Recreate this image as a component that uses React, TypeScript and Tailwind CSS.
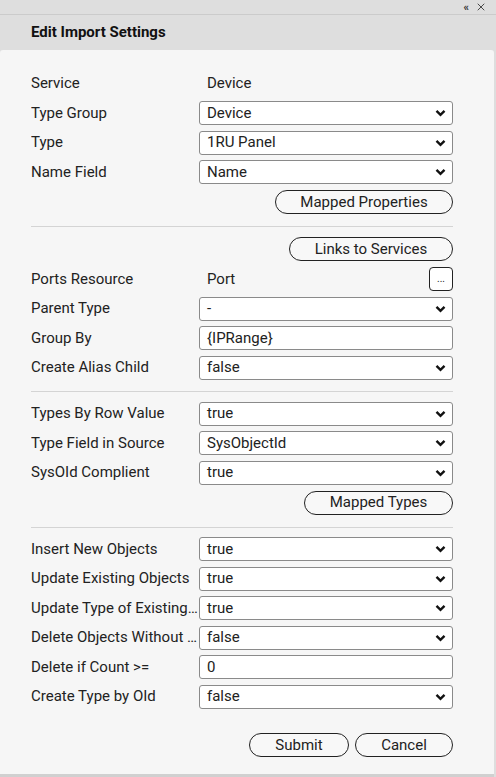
import { X } from "lucide-react";

type Field =
  | { kind: "text"; label: string; value: string; extra?: boolean }
  | { kind: "select"; label: string; value: string }
  | { kind: "input"; label: string; value: string };

const sectionOne: Field[] = [
  { kind: "text", label: "Service", value: "Device" },
  { kind: "select", label: "Type Group", value: "Device" },
  { kind: "select", label: "Type", value: "1RU Panel" },
  { kind: "select", label: "Name Field", value: "Name" },
];

const sectionTwo: Field[] = [
  { kind: "text", label: "Ports Resource", value: "Port", extra: true },
  { kind: "select", label: "Parent Type", value: "-" },
  { kind: "input", label: "Group By", value: "{IPRange}" },
  { kind: "select", label: "Create Alias Child", value: "false" },
];

const sectionThree: Field[] = [
  { kind: "select", label: "Types By Row Value", value: "true" },
  { kind: "select", label: "Type Field in Source", value: "SysObjectId" },
  { kind: "select", label: "SysOId Complient", value: "true" },
];

const sectionFour: Field[] = [
  { kind: "select", label: "Insert New Objects", value: "true" },
  { kind: "select", label: "Update Existing Objects", value: "true" },
  { kind: "select", label: "Update Type of Existing Objects", value: "true" },
  { kind: "select", label: "Delete Objects Without Source", value: "false" },
  { kind: "input", label: "Delete if Count >=", value: "0" },
  { kind: "select", label: "Create Type by OId", value: "false" },
];

function Chevron() {
  return (
    <svg width="11" height="8" viewBox="0 0 11 8" className="shrink-0">
      <polyline points="1.5,1.8 5.5,5.8 9.5,1.8" fill="none" stroke="#111" strokeWidth="2.4" />
    </svg>
  );
}

function FieldRow({ field }: { field: Field }) {
  return (
    <div className="flex h-[23px] items-center">
      <div className="w-[168px] shrink-0 overflow-hidden text-ellipsis whitespace-nowrap">{field.label}</div>
      <div className="min-w-0 flex-1">
        {field.kind === "text" && (
          <div className="flex items-center justify-between pl-[8px]">
            <span>{field.value}</span>
            {field.extra && (
              <button className="flex h-[24px] w-[24px] items-center justify-center rounded-[4px] border border-[#222] bg-white text-[10px] leading-none">
                ...
              </button>
            )}
          </div>
        )}
        {field.kind === "select" && (
          <div className="flex h-[24px] items-center justify-between rounded-[3px] border border-[#8a8a8a] bg-white pl-[7px] pr-[6px]">
            <span>{field.value}</span>
            <Chevron />
          </div>
        )}
        {field.kind === "input" && (
          <div className="flex h-[24px] items-center rounded-[3px] border border-[#8a8a8a] bg-white pl-[7px]">
            <span>{field.value}</span>
          </div>
        )}
      </div>
    </div>
  );
}

function PillButton({ label, width }: { label: string; width: string }) {
  return (
    <button
      className={`flex h-[24px] items-center justify-center rounded-full border border-[#222] bg-[#f8f8f8] leading-none ${width}`}
    >
      {label}
    </button>
  );
}

export default function App() {
  return (
    <div
      className="flex h-[777px] w-[496px] flex-col bg-[#dedede] text-[15px] text-[#222]"
      style={{ fontFamily: "Roboto, 'Liberation Sans', sans-serif" }}
    >
      {/* Window bar */}
      <div className="flex h-[15px] items-center justify-end gap-[6px] border-b border-[#cbcbcb] pr-[9px]">
        <span className="text-[11px] font-bold leading-none text-[#333]">«</span>
        <X className="h-[12px] w-[12px] text-[#222]" strokeWidth={1.6} />
      </div>

      {/* Header */}
      <div className="flex h-[35px] items-center pl-[31px] text-[15px] font-bold text-[#111]">Edit Import Settings</div>

      {/* Body */}
      <div className="mr-[2px] flex flex-1 flex-col rounded-t-[3px] border-b-[3px] border-[#d0d0d0] bg-[#f6f6f6] pl-[31px] pr-[41px] pt-[22px]">
        <div className="flex flex-col gap-[6.5px]">
          {sectionOne.map((f) => (
            <FieldRow key={f.label} field={f} />
          ))}
          <div className="flex justify-end">
            <PillButton label="Mapped Properties" width="w-[178px]" />
          </div>
        </div>

        <div className="mt-[12px] h-px bg-[#d4d4d4]" />

        <div className="mt-[10px] flex flex-col gap-[6.5px]">
          <div className="flex justify-end">
            <PillButton label="Links to Services" width="w-[164px]" />
          </div>
          {sectionTwo.map((f) => (
            <FieldRow key={f.label} field={f} />
          ))}
        </div>

        <div className="mt-[12px] h-px bg-[#d4d4d4]" />

        <div className="mt-[10px] flex flex-col gap-[6.5px]">
          {sectionThree.map((f) => (
            <FieldRow key={f.label} field={f} />
          ))}
          <div className="flex justify-end">
            <PillButton label="Mapped Types" width="w-[149px]" />
          </div>
        </div>

        <div className="mt-[12px] h-px bg-[#d4d4d4]" />

        <div className="mt-[10px] flex flex-col gap-[6.5px]">
          {sectionFour.map((f) => (
            <FieldRow key={f.label} field={f} />
          ))}
        </div>

        <div className="mt-[25px] flex justify-end gap-[6px]">
          <PillButton label="Submit" width="w-[100px]" />
          <PillButton label="Cancel" width="w-[98px]" />
        </div>
      </div>
    </div>
  );
}
